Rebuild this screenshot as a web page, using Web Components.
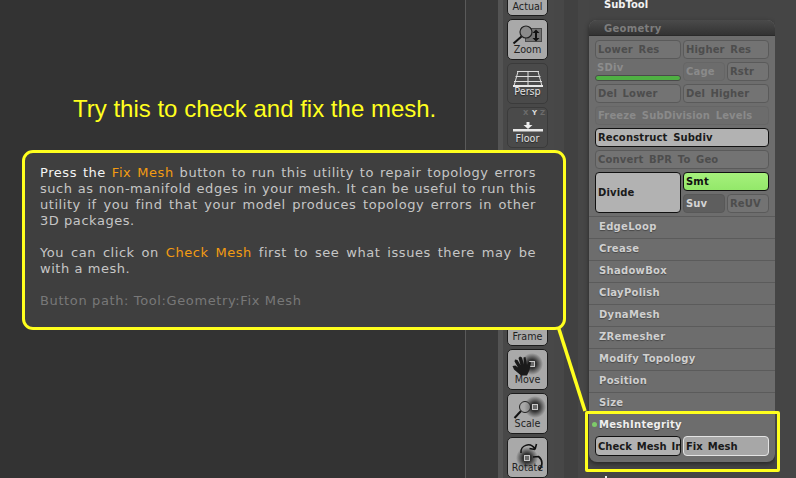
<!DOCTYPE html>
<html>
<head>
<meta charset="utf-8">
<style>
  html, body { margin: 0; padding: 0; background: #333; }
  body { width: 796px; height: 478px; overflow: hidden; }
</style>
</head>
<body>
<zb-screen>
  <zb-canvas slot="canvas"></zb-canvas>
  <zb-shelf slot="shelf">
    <zb-shelf-btn label="Actual" state="on"></zb-shelf-btn>
    <zb-shelf-btn label="Zoom" state="on" icon="zoom"></zb-shelf-btn>
    <zb-shelf-btn label="Persp" icon="persp"></zb-shelf-btn>
    <zb-shelf-btn label="Floor" icon="floor"></zb-shelf-btn>
    <div style="height:151px"></div>
    <zb-shelf-btn label="Frame" state="on"></zb-shelf-btn>
    <zb-shelf-btn label="Move" state="on" icon="move"></zb-shelf-btn>
    <zb-shelf-btn label="Scale" state="on" icon="scale"></zb-shelf-btn>
    <zb-shelf-btn label="Rotate" state="on" icon="rotate"></zb-shelf-btn>
  </zb-shelf>
  <zb-palette slot="palette"></zb-palette>
</zb-screen>
<zb-callout></zb-callout>

<script>
const PIXEL = `"DejaVu Sans", "Liberation Sans", sans-serif`;

class ZbScreen extends HTMLElement {
  constructor() {
    super();
    this.attachShadow({ mode: "open" }).innerHTML = `
    <style>
      :host { display: grid; grid-template-columns: 498px 56px 35px 186px 1fr; height: 478px; overflow: hidden; }
      .shelf { background: linear-gradient(90deg, #535353 0 5px, #484848 5px); overflow: hidden; }
      .gutter { background: linear-gradient(90deg, #474747 0 10px, #414141 10px 24px, #464646 24px); }
      .rest, .pal { background: #454545; }
    </style>
    <slot name="canvas"></slot>
    <div class="shelf"><slot name="shelf"></slot></div>
    <div class="gutter"></div>
    <div class="pal"><slot name="palette"></slot></div>
    <div class="rest"></div>`;
  }
}

class ZbCanvas extends HTMLElement {
  constructor() {
    super();
    this.attachShadow({ mode: "open" }).innerHTML = `
    <style>
      :host { display: block; background: #333; height: 478px; position: relative; }
      .line { position: absolute; left: 465px; top: 0; bottom: 0; width: 1px; background: #5a5a5a; }
      .fill { position: absolute; left: 466px; right: 0; top: 0; bottom: 0; background: #393939; }
      h1 { margin: 0; padding: 95px 0 0 73px; font: 400 24px/28px "Liberation Sans", sans-serif; color: #ffff1e; white-space: nowrap; position: relative; }
    </style>
    <div class="fill"></div><div class="line"></div>
    <h1>Try this to check and fix the mesh.</h1>`;
  }
}

class ZbShelf extends HTMLElement {
  constructor() {
    super();
    this.attachShadow({ mode: "open" }).innerHTML = `
    <style>
      :host { display: flex; flex-direction: column; gap: 3px; padding: 0 6px 0 9px; margin-top: -25px; }
    </style>
    <slot></slot>`;
  }
}

// icon coords are local to the inside of a shelf button (39px wide)
const ball = (id, cx, cy) => `
  <defs><radialGradient id="${id}"><stop offset="0.4" stop-color="#333"/><stop offset="1" stop-color="#333" stop-opacity="0"/></radialGradient></defs>
  <circle cx="${cx}" cy="${cy}" r="11" fill="url(#${id})"/>
  <rect x="${cx - 2.5}" y="${cy - 2.5}" width="5" height="5" fill="#6a6a6a" stroke="#c8c8c8"/>`;

const ICONS = {
  zoom: `
    <rect x="17.500" y="8.500" width="16" height="13" fill="#747474" stroke="#4a4a4a"/>
    <path d="M28 11v9" stroke="#111" stroke-width="2"/>
    <path d="M24.500 13L28 9.500 31.500 13zM24.500 18L28 21.500 31.500 18z" fill="#111"/>
    <circle cx="18" cy="12" r="6" fill="#8b8b8b" stroke="#222" stroke-width="1.200"/>
    <path d="M13.500 16.500L5.500 23.500" stroke="#111" stroke-width="2"/>`,
  persp: `
    <path d="M9 7.500h22M7.500 12.500h25M6 17.500h28M10 7.500L6 22M20 7.500V22M30 7.500L34 22" stroke="#dcdcdc" fill="none"/>
    <rect x="5" y="21" width="30" height="2" fill="#e8e8e8"/>`,
  floor: `
    <text x="15" y="7" font-size="7" font-weight="700" fill="#6c6c6c">X</text>
    <text x="24" y="7" font-size="7" font-weight="700" fill="#ddd">Y</text>
    <text x="32" y="7" font-size="7" font-weight="700" fill="#6c6c6c">Z</text>
    <rect x="18.500" y="14" width="3" height="3" fill="#eee"/>
    <path d="M15.500 17h9L20 21z" fill="#eee"/>
    <rect x="5" y="21" width="30" height="2.500" fill="#e8e8e8"/>`,
  move: ball("gm", 24, 14) + `
    <path d="M13 25.500L6 19.500 4.500 16 7.500 15.500 10 17.500 6.500 11.500 7 9.500 9.500 10 12.500 15 10.500 8 12 6.500 14 7.500 16 14.500 15.500 7.500 17.500 7 19 15 21 11.500 23 12.500 21.500 20 19 25.500z" fill="#1a1a1a"/>`,
  scale: ball("gs", 27, 13) + `
    <circle cx="17" cy="13" r="5.500" fill="#a8a8a8" fill-opacity=".6" stroke="#222" stroke-width="1"/>
    <path d="M13 17L6.500 24" stroke="#111" stroke-width="2"/>`,
  rotate: ball("gr", 19, 20) + `
    <path d="M13 15C12 8 22 3 27 11M27 11.500L21.500 10.500M27 11.500L28.500 6M25 19L30.500 18.500C35 22 35 28 31 32" fill="none" stroke="#111" stroke-width="1.600"/>`
};

class ZbShelfBtn extends HTMLElement {
  constructor() {
    super();
    const on = this.getAttribute("state") === "on";
    const name = this.getAttribute("icon");
    const head = name === "persp" ? 22 : name === "floor" || !name ? 25 : 24;
    this.attachShadow({ mode: "open" }).innerHTML = `
    <style>
      :host { display: block; flex: none; height: 41px; box-sizing: border-box; border-radius: 5px;
        border: 1px solid ${on ? "#1c1c1c" : "#3b3b3b"}; background: ${on ? "#a9a9a9" : "#4a4a4a"};
        font: 9.6px/11px ${PIXEL}; color: ${on ? "#222" : "#e2e2e2"}; overflow: hidden; text-align: center; }
      svg { display: block; overflow: visible; font-family: ${PIXEL}; }
      span { display: block; position: relative; ${on ? "" : "text-shadow: 0 1px 1px #222;"} }
    </style>
    <svg width="39" height="${head}">${ICONS[name] || ""}</svg>
    <span>${this.getAttribute("label")}</span>`;
  }
}

class ZbBtn extends HTMLElement {
  constructor() {
    super();
    this.attachShadow({ mode: "open" }).innerHTML = `
    <style>
      :host { display: flex; align-items: center; box-sizing: border-box; min-width: 0; height: 100%; padding-left: 2px; border-radius: 4px;
        border: 1px solid #5a5a5a; background: #737373; color: #4d4d4d; overflow: hidden; white-space: nowrap;
        font: 700 10px ${PIXEL}; letter-spacing: 0.15px; word-spacing: 2px; }
      span { flex: none; }
      :host([kind="on"]) { background: #b2b2b2; border-color: #111; color: #1a1a1a; }
      :host([kind="green"]) { background: linear-gradient(#a6f07c, #93e86a); border-color: #111; color: #111; }
      :host([kind="dark"]) { background: #5e5e5e; border-color: #585858; color: #d4d4d4; }
      :host([kind="flat"]) { background: #6c6c6c; border-color: #666; color: #8a8a8a; }
      :host([kind="fix"]) { background: #a7a7a7; border-color: #e3e3e3; color: #191919; }
    </style>
    <span><slot></slot></span>`;
  }
}

class ZbRow extends HTMLElement {
  constructor() {
    super();
    this.attachShadow({ mode: "open" }).innerHTML = `
    <style>
      :host { display: flex; align-items: center; box-sizing: border-box; height: 22px; border-top: 1px solid #5b5b5b; padding: 0 0 2px 10px;
        color: #d0d0d0; font: 700 10px ${PIXEL}; letter-spacing: 0.3px; position: relative; text-shadow: 0 1px 1px rgba(0,0,0,.35); }
      :host([dot])::before { content: ""; position: absolute; left: 3px; top: 8px; width: 5px; height: 5px; border-radius: 50%; background: #7ecb6a; }
      :host([dot]) { color: #efefef; border-top: 0; }
    </style>
    <slot></slot>`;
  }
}

class ZbPalette extends HTMLElement {
  constructor() {
    super();
    this.attachShadow({ mode: "open" }).innerHTML = `
    <style>
      :host { display: block; font: 700 10px ${PIXEL}; letter-spacing: 0.3px; }
      .subtool { height: 20px; padding-left: 15px; color: #f2f2f2; line-height: 9px; letter-spacing: 0; }
      .panel { width: 186px; height: 442px; background: #6d6d6d; border-radius: 8px; box-shadow: 0 2px 5px rgba(0,0,0,.45); overflow: hidden; }
      .head { height: 15px; background: linear-gradient(#4a4a4a, #333); border-bottom: 1px solid #2a2a2a; color: #7d7d7d; padding-left: 15px; line-height: 17px; }
      .grid { display: grid; grid-template-columns: repeat(4, 42px); grid-auto-rows: 19px; column-gap: 2px; row-gap: 3px; padding: 4px 5px 3px 6px; }
      .w2 { grid-column: span 2; }
      .w4 { grid-column: span 4; }
      .tall { grid-column: span 2; grid-row: span 2; }
      .sdiv { grid-column: span 2; color: #8c8c8c; padding-left: 2px; line-height: 12px; }
      .bar { height: 4px; background: #4fb043; border-radius: 3px; margin: 1px 0 0 -2px; border: 1px solid #4a4a4a; }
      .fix { display: grid; grid-template-columns: 86px 86px; gap: 2px; height: 20px; padding: 0 5px 0 6px; }
      .fix zb-btn { letter-spacing: 0; word-spacing: 1.5px; }
      .tick { width: 2px; height: 2px; margin: 14px 0 0 16px; background: #eee; }
    </style>
    <div class="subtool">SubTool</div>
    <div class="panel">
      <div class="head">Geometry</div>
      <div class="grid">
        <zb-btn class="w2">Lower Res</zb-btn><zb-btn class="w2">Higher Res</zb-btn>
        <div class="sdiv">SDiv<div class="bar"></div></div><zb-btn kind="flat">Cage</zb-btn><zb-btn>Rstr</zb-btn>
        <zb-btn class="w2">Del Lower</zb-btn><zb-btn class="w2">Del Higher</zb-btn>
        <zb-btn class="w4" kind="flat">Freeze SubDivision Levels</zb-btn>
        <zb-btn class="w4" kind="on">Reconstruct Subdiv</zb-btn>
        <zb-btn class="w4">Convert BPR To Geo</zb-btn>
        <zb-btn class="tall" kind="on">Divide</zb-btn><zb-btn class="w2" kind="green">Smt</zb-btn>
        <zb-btn kind="dark">Suv</zb-btn><zb-btn>ReUV</zb-btn>
      </div>
      <zb-row>EdgeLoop</zb-row>
      <zb-row>Crease</zb-row>
      <zb-row>ShadowBox</zb-row>
      <zb-row>ClayPolish</zb-row>
      <zb-row>DynaMesh</zb-row>
      <zb-row>ZRemesher</zb-row>
      <zb-row>Modify Topology</zb-row>
      <zb-row>Position</zb-row>
      <zb-row>Size</zb-row>
      <zb-row dot>MeshIntegrity</zb-row>
      <div class="fix"><zb-btn kind="on">Check Mesh Int</zb-btn><zb-btn kind="fix">Fix Mesh</zb-btn></div>
    </div>
    <div class="tick"></div>`;
  }
}

class ZbCallout extends HTMLElement {
  constructor() {
    super();
    this.attachShadow({ mode: "open" }).innerHTML = `
    <style>
      :host { display: block; position: absolute; left: 0; top: 0; width: 796px; height: 478px; pointer-events: none; }
      .box { position: absolute; left: 22px; top: 150px; width: 544px; height: 180px; box-sizing: border-box; border: 3px solid #ffff1e; border-radius: 11px;
        background: #3f3f3f; padding: 12px 27px 0 15px; font: 13px/16px ${PIXEL}; letter-spacing: 0.55px; color: #c6c6c6; }
      .l { display: block; white-space: nowrap; text-align: justify; text-align-last: justify; }
      .end { text-align-last: left; margin-bottom: 16px; }
      .w { color: #f4f4f4; }
      .o { color: #f39c12; }
      .path { color: #787878; text-align-last: left; letter-spacing: 0.62px; }
      .hl { position: absolute; left: 585px; top: 411px; width: 195px; height: 61px; box-sizing: border-box; border: 3px solid #ffff1e; border-radius: 2px; }
      svg { position: absolute; left: 0; top: 0; }
    </style>
    <svg width="796" height="478"><path d="M558 326L585 411" stroke="#ffff1e" stroke-width="3.500" fill="none"/></svg>
    <div class="hl"></div>
    <div class="box">
      <span class="l"><span class="w">Press the</span> <span class="o">Fix Mesh</span> button to run this utility to repair topology errors</span>
      <span class="l">such as non-manifold edges in your mesh. It can be useful to run this</span>
      <span class="l">utility if you find that your model produces topology errors in other</span>
      <span class="l end">3D packages.</span>
      <span class="l">You can click on <span class="o">Check Mesh</span> first to see what issues there may be</span>
      <span class="l end">with a mesh.</span>
      <span class="l path">Button path: Tool:Geometry:Fix Mesh</span>
    </div>`;
  }
}

customElements.define("zb-screen", ZbScreen);
customElements.define("zb-canvas", ZbCanvas);
customElements.define("zb-shelf", ZbShelf);
customElements.define("zb-shelf-btn", ZbShelfBtn);
customElements.define("zb-btn", ZbBtn);
customElements.define("zb-row", ZbRow);
customElements.define("zb-palette", ZbPalette);
customElements.define("zb-callout", ZbCallout);
</script>
</body>
</html>
